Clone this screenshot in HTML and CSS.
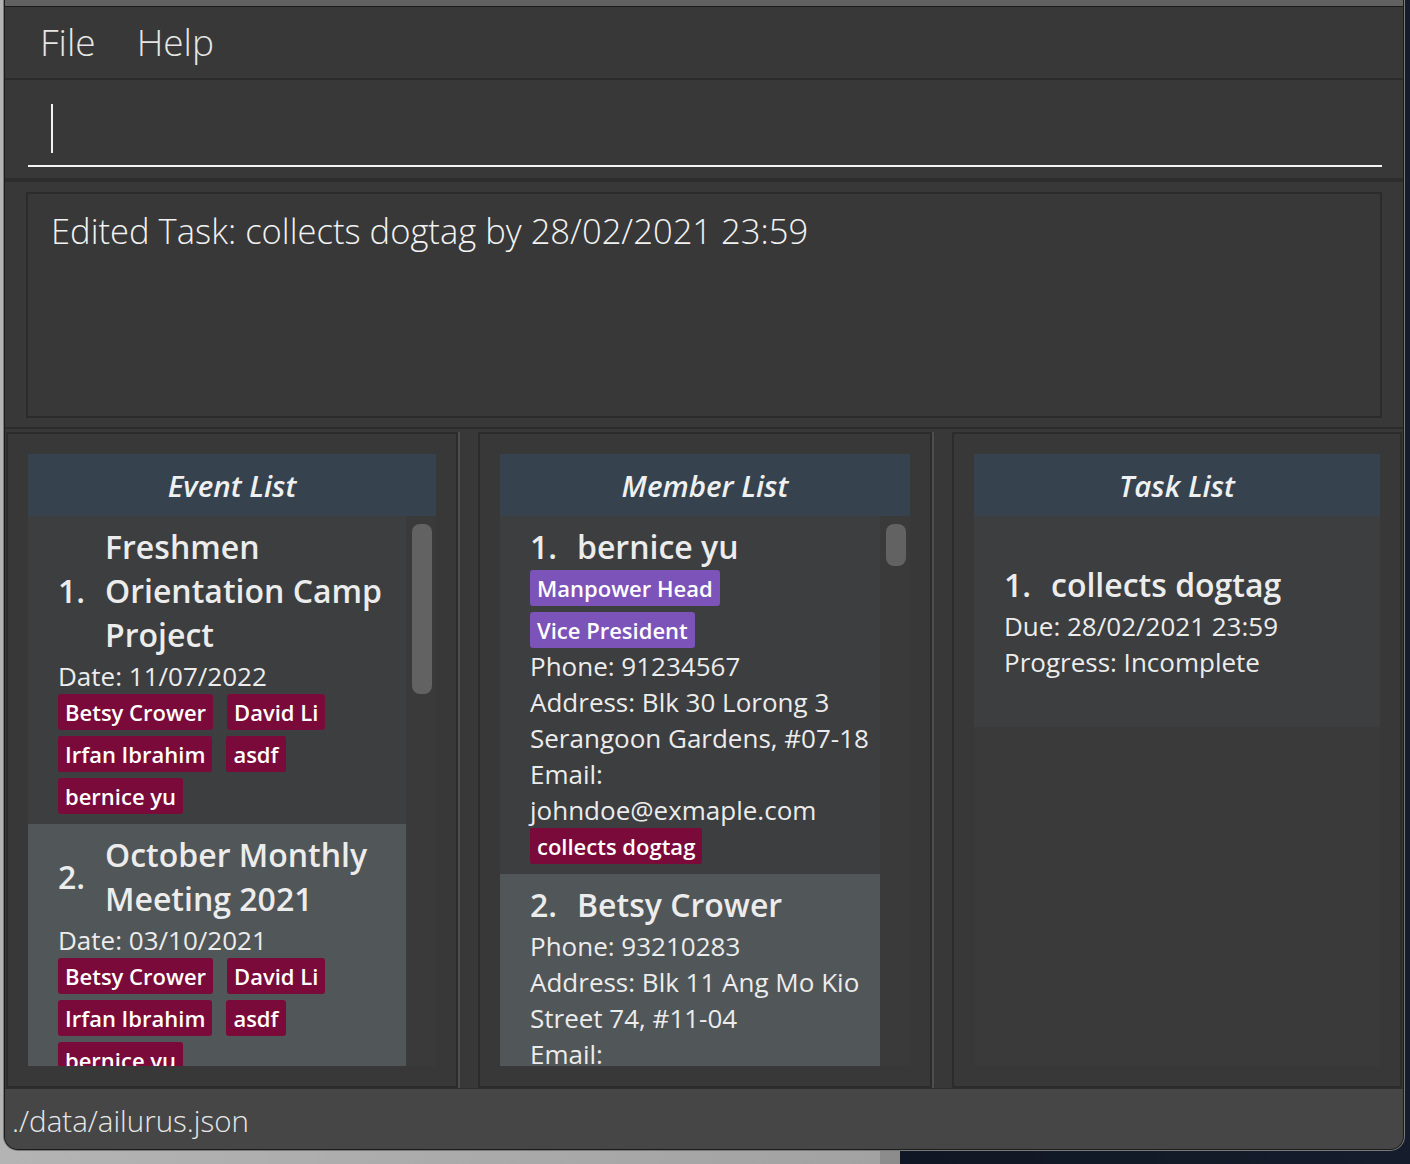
FILE: index.html
```html
<!DOCTYPE html>
<html lang="en">
<head>
<meta charset="utf-8">
<title>Ailurus</title>
<link rel="stylesheet" href="styles.css">
</head>
<body>
<div class="window">
  <div class="titlestrip"></div>
  <div class="menubar"><span class="menu-item">File</span><span class="menu-item">Help</span></div>
  <div class="command"><div class="cmdbox"><span class="caret"></span></div></div>
  <div class="result"><div class="resultbox">Edited Task: collects dogtag by 28/02/2021 23:59</div></div>
  <div class="lists">
    <section class="panel panel-event">
      <div class="phead">Event List</div>
      <div class="plist">
        <div class="cells">
          <div class="cell cell-a">
            <div class="namerow"><span class="idx">1.</span><span class="name">Freshmen<br>Orientation Camp<br>Project</span></div>
            <div class="line">Date: 11/07/2022</div>
            <div class="tags">
              <span class="tag">Betsy Crower</span><span class="tag">David Li</span><span class="tag">Irfan Ibrahim</span><span class="tag">asdf</span><span class="tag">bernice yu</span>
            </div>
          </div>
          <div class="cell cell-b">
            <div class="namerow"><span class="idx">2.</span><span class="name">October Monthly<br>Meeting 2021</span></div>
            <div class="line">Date: 03/10/2021</div>
            <div class="tags">
              <span class="tag">Betsy Crower</span><span class="tag">David Li</span><span class="tag">Irfan Ibrahim</span><span class="tag">asdf</span><span class="tag">bernice yu</span>
            </div>
          </div>
        </div>
        <div class="scrollbar"><div class="thumb thumb-event"></div></div>
      </div>
    </section>
    <div class="divider"></div>
    <section class="panel panel-member">
      <div class="phead">Member List</div>
      <div class="plist">
        <div class="cells">
          <div class="cell cell-a">
            <div class="namerow"><span class="idx">1.</span><span class="name">bernice yu</span></div>
            <div class="tags">
              <span class="tag role">Manpower Head</span><span class="tag role">Vice President</span>
            </div>
            <div class="line">Phone: 91234567</div>
            <div class="line">Address: Blk 30 Lorong 3</div>
            <div class="line">Serangoon Gardens, #07-18</div>
            <div class="line">Email:</div>
            <div class="line">johndoe@exmaple.com</div>
            <div class="tags">
              <span class="tag">collects dogtag</span>
            </div>
          </div>
          <div class="cell cell-b">
            <div class="namerow"><span class="idx">2.</span><span class="name">Betsy Crower</span></div>
            <div class="line">Phone: 93210283</div>
            <div class="line">Address: Blk 11 Ang Mo Kio</div>
            <div class="line">Street 74, #11-04</div>
            <div class="line">Email:</div>
          </div>
        </div>
        <div class="scrollbar"><div class="thumb thumb-member"></div></div>
      </div>
    </section>
    <div class="divider"></div>
    <section class="panel panel-task">
      <div class="phead">Task List</div>
      <div class="plist">
        <div class="cells">
          <div class="cell cell-a task-cell">
            <div class="namerow"><span class="idx">1.</span><span class="name">collects dogtag</span></div>
            <div class="line">Due: 28/02/2021 23:59</div>
            <div class="line">Progress: Incomplete</div>
          </div>
        </div>
      </div>
    </section>
  </div>
  <div class="status">./data/ailurus.json</div>
</div>
</body>
</html>
```

FILE: styles.css
```css
* { box-sizing: border-box; }

html, body {
  margin: 0;
  padding: 0;
}

body {
  width: 1410px;
  height: 1164px;
  overflow: hidden;
  background: linear-gradient(to right, #b4b4b4 0, #a2a2a2 880px, #8c8c8c 880px, #8c8c8c 900px, #101623 900px, #151d2c 100%);
  font-family: "Open Sans", "Noto Sans", sans-serif;
  color: #ececec;
}

.window {
  margin-left: 4px;
  width: 1400px;
  height: 1150px;
  background: #383838;
  border: 1px solid #1c1c1c;
  border-top: none;
  border-radius: 0 0 14px 14px;
  box-shadow: 0 0 0 1px #7a7a7a;
  overflow: hidden;
  display: flex;
  flex-direction: column;
}

.titlestrip {
  height: 7px;
  flex: none;
  background: #616162;
  border-bottom: 1px solid #1a1a1a;
}

.menubar {
  height: 73px;
  flex: none;
  display: flex;
  align-items: center;
  gap: 41px;
  padding-left: 35px;
  padding-bottom: 2px;
  border-bottom: 2px solid #2b2b2b;
  font-size: 37px;
  font-weight: 300;
  color: #e6e6e6;
}

.command {
  height: 102px;
  flex: none;
  padding: 0 21px 0 23px;
  border-bottom: 4px solid #2d2d2d;
}

.cmdbox {
  height: 87px;
  border-bottom: 2px solid #f4f4f4;
  padding: 24px 0 0 23px;
}

.caret {
  display: block;
  width: 2px;
  height: 49px;
  background: #f2f2f2;
}

.result {
  height: 247px;
  flex: none;
  padding: 10px 21px 9px 21px;
  border-bottom: 2px solid #2b2b2b;
}

.resultbox {
  height: 226px;
  border: 2px solid #2b2b2b;
  background: #383838;
  padding: 13px 0 0 23px;
  font-size: 34.6px;
  font-weight: 300;
  color: #f2f2f2;
}

.lists {
  height: 659px;
  flex: none;
  display: flex;
  padding: 3px 1px 0 1px;
}

.panel {
  height: 656px;
  flex: none;
  border: 2px solid #2c2c2c;
  padding: 20px;
  display: flex;
  flex-direction: column;
}

.panel-event { width: 452px; }
.panel-member { width: 454px; }
.panel-task { width: 450px; }

.divider {
  width: 20px;
  flex: none;
  border-left: 2px solid #4e4e4e;
}

.phead {
  height: 62px;
  flex: none;
  background: #36434e;
  display: flex;
  align-items: center;
  justify-content: center;
  font-size: 29.5px;
  font-style: italic;
  font-weight: 600;
  color: #eef0f2;
}

.plist {
  height: 550px;
  flex: none;
  display: flex;
  overflow: hidden;
  background: #3a3a3a;
}

.cells {
  flex: 1;
  min-width: 0;
  overflow: hidden;
}

.scrollbar {
  width: 30px;
  flex: none;
  padding: 8px 4px 0 6px;
}

.thumb {
  width: 20px;
  border-radius: 8px;
  background: #626262;
}

.thumb-event { height: 170px; }
.thumb-member { height: 42px; }

.cell {
  padding: 9px 8px 10px 30px;
}

.cell-a { background: #3c3e40; }
.cell-b { background: #515658; }

.task-cell {
  padding-top: 47px;
  padding-bottom: 47px;
}

.namerow {
  display: flex;
  align-items: center;
  font-size: 32px;
  font-weight: 600;
  line-height: 44px;
  color: #ececec;
  margin-bottom: 1px;
}

.idx {
  width: 47px;
  flex: none;
}

.line {
  font-size: 26px;
  line-height: 36px;
  color: #ececec;
  white-space: nowrap;
}

.tags {
  display: flex;
  flex-wrap: wrap;
  gap: 6px 14px;
}

.tag {
  display: block;
  height: 36px;
  line-height: 36px;
  padding: 0 7px;
  border-radius: 3px;
  background: #7a0a39;
  color: #ffffff;
  font-size: 22px;
  font-weight: 600;
  white-space: nowrap;
}

.tag.role { background: #7b53b9; }

.status {
  flex: 1;
  background: #464646;
  border-top: 1px solid #2e2e2e;
  padding: 11px 0 0 7px;
  font-size: 29.5px;
  font-weight: 300;
  color: #e8e8e8;
}
```
